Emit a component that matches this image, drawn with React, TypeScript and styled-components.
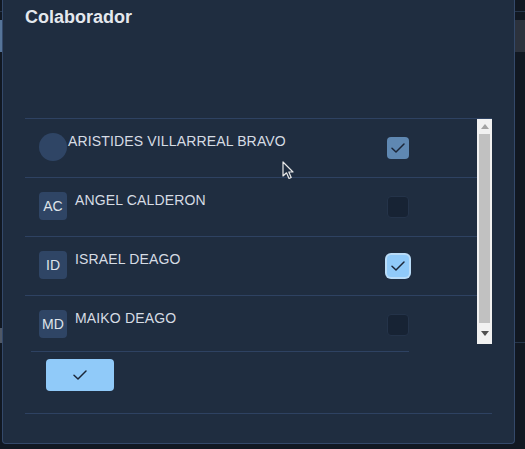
import { FC } from 'react'
import styled, { createGlobalStyle } from 'styled-components'

type Colaborador = {
  id: number
  name: string
  initials?: string
  selected: boolean
  focused?: boolean
}

const colaboradores: Colaborador[] = [
  { id: 1, name: 'ARISTIDES VILLARREAL BRAVO', selected: true },
  { id: 2, name: 'ANGEL CALDERON', initials: 'AC', selected: false },
  { id: 3, name: 'ISRAEL DEAGO', initials: 'ID', selected: true, focused: true },
  { id: 4, name: 'MAIKO DEAGO', initials: 'MD', selected: false }
]

const GlobalStyle = createGlobalStyle`
  *, *::before, *::after {
    box-sizing: border-box;
  }
  html, body {
    margin: 0;
    padding: 0;
    background: #111822;
    font-family: "Liberation Sans", Arial, sans-serif;
  }
`

const CheckIcon: FC<{ size?: number }> = ({ size = 16 }) => (
  <svg width={size} height={size} viewBox="0 0 16 16" fill="none">
    <path d="M2 8.3 L6 12 L14 4" stroke="#1b2638" strokeWidth="1.5" strokeLinecap="round" strokeLinejoin="round" />
  </svg>
)

const App: FC = () => {
  return (
    <>
      <GlobalStyle />
      <Page>
        <LeftEdge>
          <EdgeLine />
          <EdgeBlock $color="#56759a" />
          <EdgeSpacer />
          <EdgeBlock $color="#4f5866" $height={15} />
        </LeftEdge>
        <Dialog>
          <Title>Colaborador</Title>
          <ListBox>
            <Rows>
              {colaboradores.map((c) => (
                <Row key={c.id}>
                  {c.initials ? <Avatar>{c.initials}</Avatar> : <Avatar $round />}
                  <Name $tight={!c.initials}>{c.name}</Name>
                  <CheckBox $checked={c.selected} $focused={c.focused}>
                    {c.selected && <CheckIcon />}
                  </CheckBox>
                </Row>
              ))}
            </Rows>
            <ScrollBar>
              <ScrollArrow $dim>
                <svg width="8" height="5" viewBox="0 0 8 5">
                  <path d="M0 5 L4 0 L8 5 Z" fill="#a3a3a3" />
                </svg>
              </ScrollArrow>
              <ScrollThumb />
              <ScrollArrow>
                <svg width="8" height="5" viewBox="0 0 8 5">
                  <path d="M0 0 L8 0 L4 5 Z" fill="#505050" />
                </svg>
              </ScrollArrow>
            </ScrollBar>
          </ListBox>
          <Actions>
            <ConfirmButton>
              <CheckIcon />
            </ConfirmButton>
          </Actions>
          <Footer />
          <Cursor width="12" height="19" viewBox="0 0 12 19">
            <path
              d="M1 1 L1 15 L4.5 11.8 L7 17.5 L9.2 16.5 L6.8 11 L11 11 Z"
              fill="#1f2d40"
              stroke="#e8e8e8"
              strokeWidth="1.2"
              strokeLinejoin="round"
            />
          </Cursor>
        </Dialog>
        <RightEdge>
          <EdgeLine />
          <EdgeBlock $color="#2c323d" />
          <EdgeSpacer />
          <EdgeLine />
        </RightEdge>
      </Page>
    </>
  )
}

const Page = styled.div`
  display: flex;
  flex-direction: row;
  align-items: flex-start;
  width: 525px;
  height: 449px;
  overflow: hidden;
`

const LeftEdge = styled.div`
  display: flex;
  flex-direction: column;
  width: 2px;
  height: 343px;
  flex-shrink: 0;
`

const RightEdge = styled.div`
  display: flex;
  flex-direction: column;
  flex: 1;
  height: 343px;
`

const EdgeLine = styled.div`
  margin-top: 11px;
  height: 1px;
  background: #27364b;
`

const EdgeBlock = styled.div<{ $color: string; $height?: number }>`
  margin-top: 8px;
  height: ${(p) => p.$height ?? 32}px;
  background: ${(p) => p.$color};
`

const EdgeSpacer = styled.div`
  flex: 1;
`

const Dialog = styled.div`
  position: relative;
  display: flex;
  flex-direction: column;
  width: 513px;
  height: 444px;
  padding: 0 22px;
  background: #1f2d40;
  border: 1px solid #34496a;
  border-top: none;
  border-radius: 0 0 4px 4px;
  flex-shrink: 0;
`

const Title = styled.div`
  height: 118px;
  padding-top: 6px;
  font-size: 18px;
  line-height: 22px;
  font-weight: 700;
  color: #e4e8ee;
`

const ListBox = styled.div`
  display: flex;
  flex-direction: row;
  height: 226px;
  flex-shrink: 0;
  border-top: 1px solid #2e4262;
`

const Rows = styled.div`
  flex: 1;
  overflow: hidden;
`

const Row = styled.div`
  display: flex;
  flex-direction: row;
  align-items: flex-start;
  height: 59px;
  padding: 12px 68px 0 14px;
  border-bottom: 1px solid #2e4262;
`

const Avatar = styled.div<{ $round?: boolean }>`
  display: flex;
  align-items: center;
  justify-content: center;
  width: 28px;
  height: 28px;
  margin-top: 2px;
  flex-shrink: 0;
  border-radius: ${(p) => (p.$round ? '50%' : '4px')};
  background: #2f4565;
  color: #dfe4ea;
  font-size: 14px;
`

const Name = styled.div<{ $tight?: boolean }>`
  flex: 1;
  margin-left: ${(p) => (p.$tight ? 1 : 8)}px;
  font-size: 14px;
  line-height: 21px;
  letter-spacing: 0.15px;
  color: #d6dce4;
`

const CheckBox = styled.div<{ $checked: boolean; $focused?: boolean }>`
  display: flex;
  align-items: center;
  justify-content: center;
  width: 22px;
  height: 22px;
  margin-top: 6px;
  border-radius: 4px;
  background: ${(p) => (p.$focused ? '#90caf9' : p.$checked ? '#5f88b2' : '#172334')};
  border: 1px solid ${(p) => (p.$checked ? 'transparent' : '#243349')};
  box-shadow: ${(p) => (p.$focused ? '0 0 0 2px #b9dcf8' : 'none')};
`

const ScrollBar = styled.div`
  display: flex;
  flex-direction: column;
  width: 15px;
  flex-shrink: 0;
  background: #f1f1f1;
`

const ScrollArrow = styled.div<{ $dim?: boolean }>`
  display: flex;
  align-items: center;
  justify-content: center;
  height: ${(p) => (p.$dim ? 15 : 21)}px;
`

const ScrollThumb = styled.div`
  flex: 1;
  margin: 0 2px;
  background: #c1c1c1;
`

const Actions = styled.div`
  width: 378px;
  margin: 7px 0 0 6px;
  padding: 7px 0 0 15px;
  border-top: 1px solid #2e4262;
`

const ConfirmButton = styled.button`
  display: flex;
  align-items: center;
  justify-content: center;
  width: 68px;
  height: 32px;
  padding: 0;
  border: none;
  border-radius: 4px;
  background: #90caf9;
  cursor: pointer;
`

const Footer = styled.div`
  margin-top: 22px;
  border-top: 1px solid #2e4262;
`

const Cursor = styled.svg`
  position: absolute;
  left: 279px;
  top: 161px;
  pointer-events: none;
`

export default App
